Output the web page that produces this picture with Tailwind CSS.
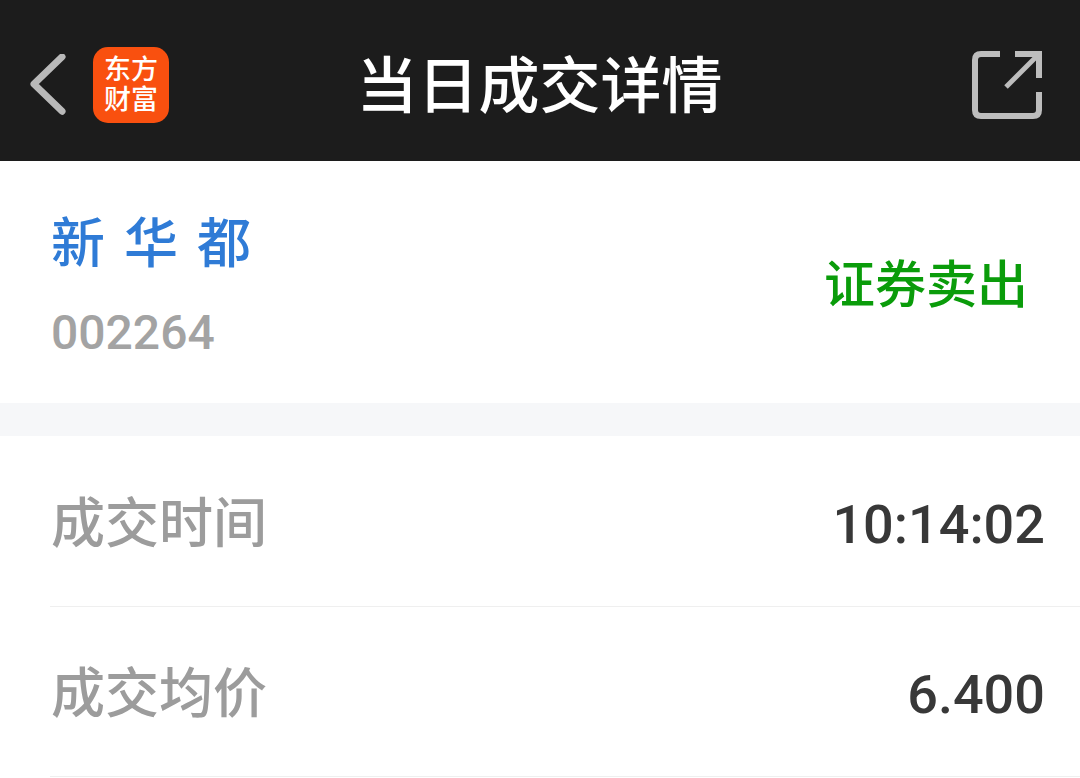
<!DOCTYPE html>
<html lang="zh">
<head>
  <meta charset="UTF-8">
  <meta name="viewport" content="width=device-width, initial-scale=1.0">
  <title>当日成交详情</title>
  <script src="https://cdn.jsdelivr.net/npm/@tailwindcss/browser@4"></script>
</head>
<body class="bg-white h-[778px] overflow-hidden font-['Roboto','Noto_Sans_CJK_SC',sans-serif]">
  <div class="header h-[161px] bg-[#1c1c1c] flex items-center justify-between pl-[30px] pr-[38px] pt-[8px]">
    <div class="flex items-center gap-[26px] w-[139px]">
      <svg class="w-[38px] h-[62px]" viewBox="0 0 38 62" fill="none">
        <path d="M33 2 L4 30 L33 58" stroke="#b9b9b9" stroke-width="7" stroke-linecap="round" stroke-linejoin="round" />
      </svg>
      <div class="w-[76px] h-[76px] shrink-0 rounded-[15px] bg-[#f9500f] text-white text-[27px] leading-[30px] font-medium flex flex-col items-center justify-center">
        <span>东方</span>
        <span>财富</span>
      </div>
    </div>
    <h1 class="text-[61px] leading-none font-medium text-white ml-[7px] mt-[6px]">当日成交详情</h1>
    <div class="w-[139px] flex justify-end">
      <svg class="w-[70px] h-[70px]" viewBox="0 0 70 70" fill="none" stroke="#bdbdbd" stroke-width="6">
        <path d="M28 4 H9 Q3 4 3 10 V60 Q3 66 9 66 H61 Q67 66 67 60 V42" />
        <path d="M43 4 H67 V28" />
        <path d="M66 5 L34 37" stroke-width="5" />
      </svg>
    </div>
  </div>

  <div class="stock h-[242px] flex items-center justify-between pl-[51px] pr-[52px]">
    <div class="flex flex-col gap-[31px] pt-[10px]">
      <p class="text-[#2f7bd6] text-[54px] leading-[60px] font-medium tracking-[19px]">新华都</p>
      <p class="text-[#a3a3a3] text-[48px] leading-[54px] font-medium">002264</p>
    </div>
    <p class="text-[#0a9c0a] text-[51px] leading-none font-medium pt-[6px]">证券卖出</p>
  </div>

  <div class="h-[33px] bg-[#f6f7f9]"></div>

  <div class="flex items-center justify-between h-[170px] pl-[51px] pr-[35px] pt-[6px]">
    <span class="text-[#9c9c9c] text-[54px] font-medium">成交时间</span>
    <span class="text-[#383838] text-[54px] font-medium">10:14:02</span>
  </div>
  <div class="h-px bg-[#efefef] ml-[50px]"></div>
  <div class="flex items-center justify-between h-[169px] pl-[51px] pr-[35px] pt-[6px]">
    <span class="text-[#9c9c9c] text-[54px] font-medium">成交均价</span>
    <span class="text-[#383838] text-[54px] font-medium">6.400</span>
  </div>
  <div class="h-px bg-[#efefef] ml-[50px]"></div>
</body>
</html>
